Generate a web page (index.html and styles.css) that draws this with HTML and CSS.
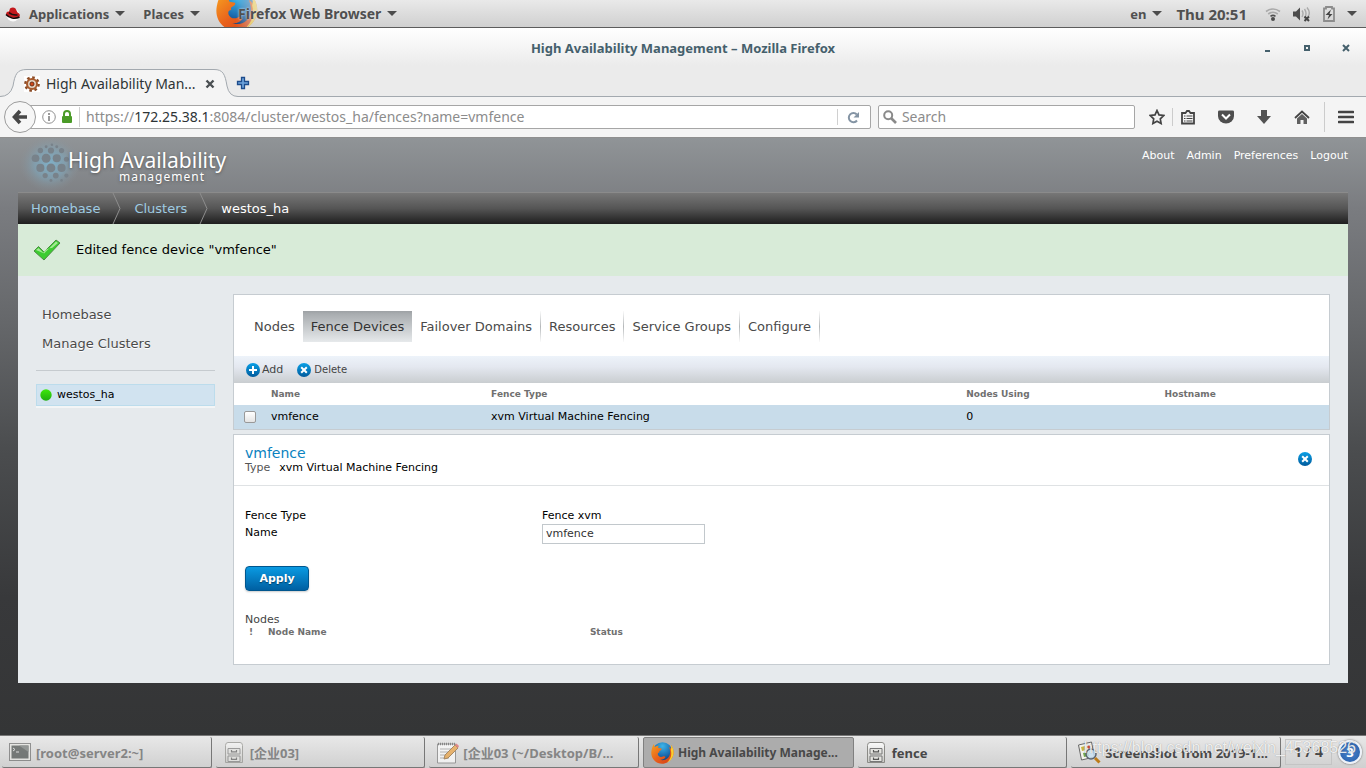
FILE: index.html
```html
<!DOCTYPE html>
<html lang="en">
<head>
<meta charset="utf-8">
<title>High Availability Management</title>
<link rel="stylesheet" href="styles.css">
</head>
<body>
<svg class="defs" aria-hidden="true">
  <defs>
    <linearGradient id="blue" x1="0" y1="0" x2="0" y2="1"><stop offset="0" stop-color="#0aa0e6"/><stop offset="1" stop-color="#005a9c"/></linearGradient>
    <linearGradient id="green" x1="0" y1="0" x2="0" y2="1"><stop offset="0" stop-color="#3ee80c"/><stop offset="1" stop-color="#1fae10"/></linearGradient>
    <linearGradient id="orange" x1="0" y1="0" x2="1" y2="1"><stop offset="0" stop-color="#f7a020"/><stop offset=".5" stop-color="#e8601c"/><stop offset="1" stop-color="#d23c14"/></linearGradient>
    <radialGradient id="globe" cx=".5" cy=".2" r=".8"><stop offset="0" stop-color="#3cb4e8"/><stop offset=".6" stop-color="#1c6cb0"/><stop offset="1" stop-color="#14346c"/></radialGradient>
    <linearGradient id="cabinet" x1="0" y1="0" x2="0" y2="1"><stop offset="0" stop-color="#fafafa"/><stop offset="1" stop-color="#c8c8c4"/></linearGradient>
    <radialGradient id="glow"><stop offset="0" stop-color="#7fb2cb" stop-opacity=".95"/><stop offset=".5" stop-color="#7fa6ba" stop-opacity=".65"/><stop offset="1" stop-color="#8a9298" stop-opacity="0"/></radialGradient>
    <symbol id="firefox" viewBox="0 0 24 24">
      <circle cx="12.5" cy="11" r="9.8" fill="url(#globe)"/>
      <path d="M21 4c3 4 3.500 9 1 13-3 5-9 7-14 5C3 20 .5 15 1.500 9.500 2 7 2.500 5 4 3l.5 3c1.500-1 3-1.500 4.500-1.500C8 5.500 8 6.500 8.500 7l3 .5c.5 1-1 2-2 2.500-.5 1 0 1.500 0 1.500-1.500 0-2 1-1.500 2.500 1 2 3 2.500 5 1.500 1-.5 2-.5 2.500.5-1 2.500-4 3-6 2.500 5 2 10-1 10.500-6 .5-3-.5-5-1-6.500 1 .5 1.500 1 2 2 .3-1 .3-2.500 0-3.500z" fill="url(#orange)"/>
      <path d="M21 4c3 4 3.500 9 1 13-1 2-3 3.500-5 4.500 4-3.500 5-8 3.800-12.500.5-1.500.5-3 .2-5z" fill="#fbcf2c"/>
    </symbol>
    <symbol id="drawers" viewBox="0 0 24 24">
      <path d="M3.500 4.500Q3.500 1.500 6 1.500h12q2.500 0 2.500 3v17h-17z" fill="url(#cabinet)" stroke="#8a8a86"/>
      <path d="M6 7.500h12v5.500H6zM6 15h12v5.500H6z" fill="#e4e4e0" stroke="#777"/>
      <path d="M9.500 9v1.800h5V9M9.500 16.500v1.800h5v-1.800" fill="none" stroke="#555" stroke-width="1.200"/>
    </symbol>
    <symbol id="cross-dot" viewBox="0 0 14 14"><circle cx="7" cy="7" r="7" fill="url(#blue)"/><path d="M4.200 4.200l5.600 5.600m0-5.600l-5.600 5.600" stroke="#fff" stroke-width="2"/></symbol>
    <symbol id="caret" viewBox="0 0 10 5"><path d="M0 0h10L5 5z" fill="#4c4c4c"/></symbol>
  </defs>
</svg>

<header class="panel">
  <button class="panel-item" type="button">
    <svg class="hat" viewBox="0 0 16 16"><circle cx="8" cy="9" r="6.500" fill="#fafafa"/><path d="M1 8C1.500 5.500 3 5.500 4 5.500L5 2.500Q8 .5 10.500 2.500l2 4c2 1 3 2.500 2 4-2 2-6 1.500-9 .5C3 10 1 9.500 1 8z" fill="#c4181c"/><path d="M4 6.500q3 3 8.500 2.500" fill="none" stroke="#1c1010" stroke-width="1.500"/><path d="M1 8.500c3 3.500 9 5 13.500 2.500" fill="none" stroke="#160808" stroke-width="1.500"/></svg>
    <span>Applications</span><svg class="caret"><use href="#caret"/></svg>
  </button>
  <button class="panel-item" type="button"><span>Places</span><svg class="caret"><use href="#caret"/></svg></button>
  <button class="panel-item app-menu" type="button"><svg class="app-logo"><use href="#firefox"/></svg><span>Firefox Web Browser</span><svg class="caret"><use href="#caret"/></svg></button>
  <div class="panel-right">
    <button class="panel-item" type="button"><span>en</span><svg class="caret"><use href="#caret"/></svg></button>
    <span class="clock">Thu 20:51</span>
    <div class="status">
      <svg width="16" height="16" viewBox="0 0 16 16" fill="none" stroke-width="1.600"><path d="M1 5.500Q8 .5 15 5.500M3.200 8Q8 4.500 12.800 8" stroke="#aaa"/><path d="M5.500 10.300Q8 8.500 10.500 10.300" stroke="#505050"/><circle cx="8" cy="13" r="2" fill="#4c4c4c"/></svg>
      <svg width="18" height="16" viewBox="0 0 18 16" fill="none"><path d="M0 5.500h3L7 1.500v13l-4-4H0z" fill="#4c4c4c"/><path d="M9 4.500q2 3 0 6.500M11.500 3q3 4.500 0 9.500M14 1.500q4 5 1 9" stroke="#aaa" stroke-width="1.400"/><path d="M11.500 10.500l4.500 4.500m0-4.500L11.500 15" stroke="#444" stroke-width="2"/></svg>
      <svg width="12" height="16" viewBox="0 0 12 16"><path d="M1 2.500h2V1h6v1.500h2V15H1z" fill="none" stroke="#8c8c8c" stroke-width="1.800"/><path d="M8 3.500L2.500 9H6l-1.500 4.500L9.500 8H6.500z" fill="#444"/></svg>
      <svg class="caret"><use href="#caret"/></svg>
    </div>
  </div>
</header>

<section class="browser-top">
  <div class="titlebar">
    <span class="title">High Availability Management – Mozilla Firefox</span>
    <div class="window-buttons">
      <button type="button" aria-label="Minimize"><svg width="8" height="8"><path d="M1 6h5v2H1z" fill="#45606c"/></svg></button>
      <button type="button" aria-label="Maximize"><svg width="8" height="8"><path d="M2 2h4v4H2z" fill="none" stroke="#45606c" stroke-width="2"/></svg></button>
      <button type="button" aria-label="Close"><svg width="8" height="8"><path d="M1 1l6 6m0-6L1 7" stroke="#45606c" stroke-width="2"/></svg></button>
    </div>
  </div>
  <div class="tabstrip">
    <div class="browser-tab">
      <svg class="tab-shape" viewBox="0 0 238 30" preserveAspectRatio="none"><path d="M0 28.500Q10 28.500 13 18C15 6 17 1.500 27 1.500H214C223 1.500 225 6 227 18Q229 28.500 238 28.500V30H0z" fill="#f4f4f4"/><path d="M0 28.500Q10 28.500 13 18C15 6 17 1.500 27 1.500H214C223 1.500 225 6 227 18Q229 28.500 238 28.500" fill="none" stroke="#a3a9af"/></svg>
      <svg class="tab-icon" viewBox="0 0 16 16"><path fill="#fff" d="M0 0h16v16H0z"/><circle cx="8" cy="8" r="6.600" fill="none" stroke="#8a4a24" stroke-width="2.500" stroke-dasharray="2.600 2.580"/><circle cx="8" cy="8" r="5" fill="#e2d2c2" stroke="#a85a2c" stroke-width="2"/><circle cx="8" cy="8" r="2" fill="#d44818" stroke="#6a3018"/></svg>
      <span class="tab-title">High Availability Man...</span>
      <button class="tab-close" type="button" aria-label="Close tab"><svg width="10" height="10"><path d="M1.500 1.500l7 7m0-7l-7 7" stroke="#4a4f52" stroke-width="2.400"/></svg></button>
    </div>
    <button class="new-tab" type="button" aria-label="New tab"><svg width="14" height="14"><path d="M5.500 1.500h3v4h4v3h-4v4h-3v-4h-4v-3h4z" fill="#6ea4dc" stroke="#1e4c8c" stroke-width="1.300"/></svg></button>
  </div>
  <nav class="toolbar" aria-label="Navigation">
    <button class="back" type="button" aria-label="Back"><svg width="16" height="16"><path d="M8 2L2.500 8 8 14M3 8h12" fill="none" stroke="#474747" stroke-width="3.600"/></svg></button>
    <div class="urlbar">
      <svg width="14" height="14" viewBox="0 0 14 14" fill="none" stroke="#909090"><circle cx="7" cy="7" r="6.300"/><path d="M7 6v5M7 3v2" stroke-width="1.800"/></svg>
      <svg width="12" height="14" viewBox="0 0 12 14"><path d="M3 6V4a3 3 0 016 0v2" fill="none" stroke="#4b9b28" stroke-width="2"/><rect x="1" y="6" width="10" height="7" rx="1" fill="#4b9b28"/></svg>
      <div class="url" role="textbox" aria-label="Address" contenteditable="true" spellcheck="false">https://<b>172.25.38.1</b>:8084/cluster/westos_ha/fences?name=vmfence</div>
      <button class="reload" type="button" aria-label="Reload"><svg width="13" height="13" viewBox="0 0 13 13"><path d="M10 9.500A4.600 4.600 0 119.800 3.500" fill="none" stroke="#8494a4" stroke-width="2"/><path d="M12 1v5.500H6.500z" fill="#8494a4"/></svg></button>
    </div>
    <label class="search"><svg width="14" height="14" viewBox="0 0 14 14" fill="none" stroke="#8a8a8a"><circle cx="5.200" cy="5.200" r="4" stroke-width="2"/><path d="M8 8l5 5" stroke-width="2.600"/></svg><input type="text" placeholder="Search" aria-label="Search"></label>
    <div class="tools">
      <button type="button" aria-label="Bookmark"><svg viewBox="0 0 16 16"><path d="M8 1.500l2 4.400 4.700.6-3.400 3.300.8 4.700L8 12.200l-4.100 2.300.8-4.700L1.300 6.500 6 5.900z" fill="none" stroke="#444" stroke-width="1.700"/></svg></button>
      <button type="button" class="ruled" aria-label="Bookmarks list"><svg viewBox="0 0 16 16"><path d="M2 4h3.500L7 2h2l1.500 2H14v10.500H2z" fill="none" stroke="#444" stroke-width="1.800"/><path d="M4 7h1.500m1 0h6M4 9.500h1.500m1 0h6M4 12h1.500m1 0h6" stroke="#444" stroke-width="1.200"/></svg></button>
      <button type="button" aria-label="Pocket"><svg viewBox="0 0 16 16"><path d="M0 2.500Q0 1.500 1.500 1.500h13Q16 1.500 16 2.500V7a8 7.500 0 01-16 0z" fill="#4e4e4e"/><path d="M4 5.500l4 4 4-4" fill="none" stroke="#fff" stroke-width="2"/></svg></button>
      <button type="button" aria-label="Downloads"><svg viewBox="0 0 16 16"><path d="M5 1h6v6h4l-7 8-7-8h4z" fill="#525252"/></svg></button>
      <button type="button" aria-label="Home"><svg viewBox="0 0 16 16"><path d="M1 9l7-6.500L15 9" fill="none" stroke="#444" stroke-width="1.800"/><path d="M3 9.500l5-4.500 5 4.500V15H9.500v-4h-3v4H3z" fill="#606060"/></svg></button>
      <button type="button" class="ruled menu" aria-label="Menu"><svg viewBox="0 0 16 16"><path d="M1 3h14M1 8h14M1 13h14" stroke="#444" stroke-width="2.600" stroke-linecap="round"/></svg></button>
    </div>
  </nav>
</section>

<main class="page">
  <header class="masthead">
    <div class="brand">
      <svg class="brand-mark" viewBox="0 0 64 56"><ellipse cx="32" cy="27" rx="32" ry="29" fill="url(#glow)"/><g fill="#78828a"><circle cx="28" cy="9" r="1.500"/><circle cx="34" cy="7" r="1.300"/><circle cx="39" cy="9" r="1.500"/><circle cx="22" cy="13" r="2.800"/><circle cx="33" cy="13" r="3.200"/><circle cx="44" cy="13" r="2.700"/><circle cx="17" cy="21" r="4"/><circle cx="28" cy="21" r="4.600"/><circle cx="39" cy="21" r="4.200"/><circle cx="49" cy="22" r="2.600"/><circle cx="22" cy="31" r="4.200"/><circle cx="33" cy="31" r="4.600"/><circle cx="44" cy="31" r="4.200"/><circle cx="27" cy="39" r="2.700"/><circle cx="38" cy="39" r="3"/><circle cx="49" cy="39" r="2.200"/><circle cx="33" cy="44" r="1.500"/><circle cx="44" cy="44" r="1.400"/></g></svg>
      <div class="brand-text"><strong>High Availability</strong><span>management</span></div>
    </div>
    <nav class="account"><a href="#about">About</a><a href="#admin">Admin</a><a href="#preferences">Preferences</a><a href="#logout">Logout</a></nav>
  </header>

  <nav class="crumbs" aria-label="Breadcrumb">
    <a href="#home">Homebase</a>
    <svg width="10" height="31" viewBox="0 0 10 31"><path d="M1 0l7 15.500L1 31" fill="none" stroke="#8e8e8e"/></svg>
    <a href="#clusters">Clusters</a>
    <svg width="10" height="31" viewBox="0 0 10 31"><path d="M1 0l7 15.500L1 31" fill="none" stroke="#8e8e8e"/></svg>
    <span>westos_ha</span>
  </nav>

  <div class="flash" role="status">
    <svg width="28" height="24" viewBox="0 0 28 24"><path d="M1 13l4.500-4.500L11 14 23 2l4 3-16 17z" fill="#3ccc30" stroke="#4c8c44"/><path d="M3 12l2.500-2 5.500 5.500L23 3.500l2 1.500-6 5q-6 0-9 5z" fill="#a4e894"/></svg>
    <span>Edited fence device "vmfence"</span>
  </div>

  <div class="workspace">
    <aside class="sidebar">
      <nav class="side-links"><a href="#home">Homebase</a><a href="#clusters">Manage Clusters</a></nav>
      <a class="cluster" href="#westos"><svg width="12" height="12"><circle cx="6" cy="6" r="5.700" fill="url(#green)"/></svg>westos_ha</a>
    </aside>

    <div class="content">
      <section class="box">
        <nav class="tabs">
          <a href="#nodes">Nodes</a><a class="active" href="#fences">Fence Devices</a><a class="rule" href="#failover">Failover Domains</a><a class="rule" href="#resources">Resources</a><a class="rule" href="#services">Service Groups</a><a class="rule" href="#configure">Configure</a>
        </nav>
        <div class="actions">
          <button class="add" type="button"><svg width="14" height="14" viewBox="0 0 14 14"><circle cx="7" cy="7" r="7" fill="url(#blue)"/><path d="M7 3v8M3 7h8" stroke="#fff" stroke-width="2"/></svg>Add</button>
          <button class="delete" type="button"><svg width="14" height="14"><use href="#cross-dot"/></svg>Delete</button>
        </div>
        <table class="fences">
          <colgroup><col class="c-check"><col class="c-name"><col class="c-type"><col class="c-using"><col></colgroup>
          <thead><tr><th></th><th>Name</th><th>Fence Type</th><th>Nodes Using</th><th>Hostname</th></tr></thead>
          <tbody><tr><td class="check"><input type="checkbox" aria-label="Select vmfence"></td><td>vmfence</td><td>xvm Virtual Machine Fencing</td><td>0</td><td></td></tr></tbody>
        </table>
      </section>

      <section class="box">
        <header class="detail-head">
          <div><h2>vmfence</h2><p><span>Type</span>xvm Virtual Machine Fencing</p></div>
          <button type="button" aria-label="Close details"><svg width="14" height="14"><use href="#cross-dot"/></svg></button>
        </header>
        <form class="detail-body">
          <div class="fields">
            <span>Fence Type</span><span>Fence xvm</span>
            <label for="fence-name">Name</label><input id="fence-name" type="text" value="vmfence">
          </div>
          <button class="apply" type="button">Apply</button>
          <h3>Nodes</h3>
          <table class="nodes"><colgroup><col class="c-flag"><col class="c-node"><col></colgroup><thead><tr><th>!</th><th>Node Name</th><th>Status</th></tr></thead></table>
        </form>
      </section>
    </div>
  </div>
</main>

<footer class="taskbar">
  <button class="task dim" type="button"><svg viewBox="0 0 24 24"><rect x="1.500" y="2.500" width="21" height="17" fill="#e8e8e4" stroke="#666"/><rect x="3.500" y="4.500" width="17" height="13" fill="#3e4442"/><path d="M5 7l2 1.500L5 10m3 1h3" fill="none" stroke="#ddd"/><path d="M11 4.500h9.500V11z" fill="#6a706e"/></svg><span>[root@server2:~]</span></button>
  <button class="task dim" type="button"><svg><use href="#drawers"/></svg><span>[企业03]</span></button>
  <button class="task dim" type="button"><svg viewBox="0 0 24 24"><path d="M2.500 3h18v19h-18z" fill="#fff" stroke="#777"/><path d="M5 8h13M5 11h9M5 14h7M5 17h9" stroke="#999"/><path d="M3 3h17" stroke="#555" stroke-width="2.500" stroke-dasharray="1 1"/><path d="M9 18l1-4L20 4l3 3-10 10z" fill="#ec9c34" stroke="#8a5c24"/><path d="M20 4l3 3 1-2-2.500-2.500z" fill="#e05858"/></svg><span>[企业03 (~/Desktop/B/...</span></button>
  <button class="task current" type="button"><svg><use href="#firefox"/></svg><span>High Availability Manage...</span></button>
  <button class="task" type="button"><svg><use href="#drawers"/></svg><span>fence</span></button>
  <button class="task" type="button"><svg viewBox="0 0 24 24"><path d="M1.500 4l13-3 3 15-13 3z" fill="#f4f4ec" stroke="#666"/><path d="M4 6l4-1 1 4-4 1z" fill="#c8b440"/><circle cx="12" cy="6" r="1.800" fill="#cc5030"/><path d="M6 12l5-1 1 4-5 1z" fill="#72a84c"/><circle cx="14" cy="13" r="5" fill="#c4dcf0" fill-opacity=".8" stroke="#5c6470" stroke-width="1.500"/><path d="M18 17l4.500 4.500" stroke="#bd7b18" stroke-width="3"/></svg><span>Screenshot from 2019-1...</span></button>
  <span class="pager">1 / 4</span>
  <button class="tray" type="button" aria-label="Messages">3</button>
  <span class="watermark">https://blog.csdn.net/weixin_45368526</span>
</footer>
</body>
</html>
```

FILE: styles.css
```css
* { box-sizing: border-box; }

body {
  margin: 0;
  min-height: 100vh;
  display: flex;
  flex-direction: column;
  font: 13px/16px "DejaVu Sans", sans-serif;
  color: #000;
  background: #353637;
}

button {
  margin: 0;
  padding: 0;
  border: 0;
  background: none;
  font: inherit;
  color: inherit;
}

a { color: inherit; text-decoration: none; }
svg { display: block; flex: none; }
h2, h3, p { margin: 0; font-weight: normal; }
.defs { position: absolute; width: 0; height: 0; }

/* Desktop panel */
.panel {
  display: flex;
  align-items: center;
  gap: 18px;
  height: 28px;
  padding: 0 9px 0 5px;
  overflow: hidden;
  border-bottom: 1px solid #5c5c5c;
  background: linear-gradient(#e9e9e9, #d0d0d0);
  font: bold 13px/20px "Noto Sans", sans-serif;
  color: #505050;
}

.panel-item { display: flex; align-items: center; gap: 6px; }
.hat { width: 16px; height: 16px; margin-right: 2px; }
.caret { width: 10px; height: 5px; }
.app-menu { position: relative; margin-left: 20px; font-size: 14px; text-shadow: 0 0 2px #eee; }
.app-menu span { position: relative; }

.app-logo {
  position: absolute;
  left: -24px;
  top: -15px;
  width: 44px;
  height: 44px;
  -webkit-mask-image: linear-gradient(90deg, #000 50%, rgba(0, 0, 0, .3));
  mask-image: linear-gradient(90deg, #000 50%, rgba(0, 0, 0, .3));
}

.panel-right { display: flex; align-items: center; gap: 14px; margin-left: auto; }
.clock { font-size: 15px; }
.status { display: flex; align-items: center; gap: 12px; margin-left: 4px; }

/* Browser frame */
.browser-top {
  background: linear-gradient(#fff, #ebebeb 38px);
  color: #2e3436;
  font-family: "Noto Sans", sans-serif;
}

.titlebar {
  display: grid;
  grid-template-columns: 1fr auto 1fr;
  align-items: center;
  height: 40px;
  padding: 0 16px;
}

.title { grid-column: 2; font-size: 13px; font-weight: bold; color: #45606c; }
.window-buttons { display: flex; justify-content: flex-end; gap: 31px; }

.tabstrip {
  display: flex;
  align-items: center;
  height: 29px;
  box-shadow: inset 0 -1px #a3a9af;
}

.browser-tab {
  position: relative;
  display: flex;
  align-items: center;
  width: 238px;
  height: 30px;
  padding: 2px 23px 0 24px;
}

.tab-shape { position: absolute; inset: 0; width: 100%; height: 100%; }
.tab-icon { position: relative; width: 16px; height: 16px; }
.tab-title { position: relative; flex: 1; margin-left: 6px; font-size: 14px; white-space: nowrap; }
.tab-close { position: relative; }
.new-tab { margin-left: -2px; }

.toolbar {
  display: flex;
  align-items: center;
  height: 41px;
  padding: 0 12px 0 4px;
  background: #f4f4f4;
  border-bottom: 1px solid #8f8f8f;
}

.back {
  position: relative;
  display: grid;
  place-items: center;
  width: 32px;
  height: 32px;
  border: 1px solid #9c9c9c;
  border-radius: 50%;
  background: #f6f6f6;
}

.urlbar, .search {
  display: flex;
  align-items: center;
  height: 24px;
  border: 1px solid #a6a6a6;
  border-radius: 2px;
  background: #fff;
  font-size: 14px;
  line-height: 20px;
}

.urlbar { flex: 844; gap: 5px; margin-left: -8px; padding-left: 13px; }

.url {
  display: flex;
  align-items: center;
  flex: 1;
  margin-left: 1px;
  padding-left: 6px;
  border-left: 1px solid #d0d0d0;
  color: #8c8c8c;
  white-space: nowrap;
}

.url b { font-weight: normal; color: #2e3436; }
.reload { display: grid; place-items: center; width: 33px; height: 16px; border-left: 1px solid #d0d0d0; }
.search { flex: 256; margin-left: 7px; padding-left: 4px; gap: 5px; }
.search input { flex: 1; min-width: 0; padding: 0; border: 0; background: none; font: inherit; color: inherit; }
.search input::placeholder { color: #8c8c8c; opacity: 1; }

.tools { display: flex; margin-left: 14px; }
.tools button { display: grid; place-items: center; width: 38px; height: 30px; }
.tools button:first-child { width: 16px; }
.tools svg { width: 16px; height: 16px; }
.tools .ruled { position: relative; }
.tools .ruled:nth-child(2) { width: 39px; margin-left: 3px; }
.tools .ruled::before { content: ""; position: absolute; left: 4px; top: 6px; width: 1px; height: 18px; background: #ccc; }
.tools .menu { width: 30px; justify-items: end; margin-left: 3px; }
.tools .menu::before { left: 0; top: 0; height: 30px; }

/* Application page */
.page {
  flex: 1;
  padding: 0 18px;
  background: linear-gradient(#909497, #7a7c80 70px, #66686b 180px, #4b4d4f 310px, #38393b 460px, #343536);
}

.masthead { display: flex; justify-content: space-between; height: 54px; }
.brand { display: flex; }
.brand-mark { width: 64px; height: 54px; margin-right: -14px; }

.brand-text {
  display: flex;
  flex-direction: column;
  padding-top: 11px;
  font-family: "Noto Sans", sans-serif;
  color: #fff;
  text-shadow: 0 1px 3px #555;
}

.brand-text strong { font-size: 21px; line-height: 22px; font-weight: 400; }
.brand-text span { padding-left: 51px; font-size: 12px; line-height: 12px; letter-spacing: 1px; }
.account { display: flex; gap: 12px; padding-top: 10px; font-size: 11px; color: #fff; }

.crumbs {
  display: flex;
  align-items: center;
  height: 32px;
  padding-left: 13px;
  gap: 12px;
  border-top: 1px solid #8b8b8b;
  background: linear-gradient(#777, #555 50%, #1e1e1e);
  color: #fff;
}

.crumbs a { color: #9fcbe2; }

.flash {
  display: flex;
  align-items: center;
  gap: 15px;
  height: 52px;
  padding-left: 15px;
  background: #d8ebd8;
}

.workspace { display: flex; gap: 18px; padding: 18px; background: #e6eaed; }
.sidebar { flex: none; width: 179px; }

.side-links {
  display: flex;
  flex-direction: column;
  gap: 13px;
  padding: 13px 6px 18px;
  margin-bottom: 13px;
  border-bottom: 1px solid #c6cbcf;
  color: #4a4a4a;
  text-shadow: 0 1px #fff;
}

.cluster {
  display: flex;
  align-items: center;
  gap: 5px;
  height: 22px;
  padding: 0 3px;
  border: 1px solid #bcdcec;
  background: #d1e3f0;
  box-shadow: 0 2px #f3f5f6;
  font-size: 11px;
}

.content { flex: 1; min-width: 0; display: flex; flex-direction: column; gap: 4px; }
.box { border: 1px solid #c6ccd1; background: #fff; }
.tabs { display: flex; padding: 16px 12px 14px; color: #4a4a4a; }
.tabs a { padding: 8px 8px 7px; white-space: nowrap; }
.tabs .active { background: linear-gradient(#9da1a4, #a9adb0 10%, #e6e9eb); color: #333; }

.tabs .rule {
  border-right: 1px solid;
  border-image: linear-gradient(#fff, #b5b8ba 50%, #fff) 1;
}

.actions {
  display: flex;
  align-items: center;
  gap: 14px;
  height: 27px;
  padding-left: 12px;
  background: linear-gradient(#edf3fa, #e4e8f0 40%, #c9cdd0);
  color: #444;
}

.actions button { display: flex; align-items: center; gap: 2px; font-size: 11px; }
.actions .delete { gap: 3px; font-size: 10px; }

table { width: 100%; border-collapse: collapse; table-layout: fixed; font-size: 11px; }
th, td { padding: 0; text-align: left; }
th { font: bold 9px/12px "DejaVu Sans", sans-serif; color: #707070; }
.fences th { height: 22px; }
.fences td { height: 24px; background: #c8dcea; }
.c-check { width: 37px; }
.c-name { width: 20.1%; }
.c-type { width: 43.4%; }
.c-using { width: 18.1%; }
.check { padding-left: 10px; }

.check input {
  display: block;
  appearance: none;
  width: 12px;
  height: 12px;
  margin: 0;
  border: 1px solid #999;
  border-radius: 2px;
  background: linear-gradient(#fff, #e4e4e4);
}

.detail-head {
  display: flex;
  align-items: center;
  justify-content: space-between;
  height: 51px;
  padding: 0 17px 2px 11px;
  border-bottom: 1px solid #dfe2e4;
}

.detail-head div { padding-top: 2px; }
.detail-head h2 { font-size: 14px; line-height: 15px; color: #0982c0; }
.detail-head p { font-size: 11px; line-height: 13px; }
.detail-head p span { margin-right: 9px; color: #555; }

.detail-body { padding: 21px 11px 26px; font-size: 11px; }
.fields { display: grid; grid-template-columns: 297px 163px; line-height: 17px; }

.fields input {
  width: 100%;
  height: 20px;
  padding: 0 3px 2px;
  border: 1px solid #c2c8cc;
  font: inherit;
  color: #333;
}

.apply {
  width: 64px;
  height: 25px;
  margin: 22px 0;
  border: 1px solid #00568e;
  border-radius: 4px;
  background: linear-gradient(#0a9ae2, #0060a2);
  box-shadow: 0 1px 2px #ccc;
  color: #fff;
  font-weight: bold;
  text-shadow: 0 1px 1px #00406c;
}

.detail-body h3 { font-size: 11px; line-height: 13px; color: #444; }
.nodes th:first-child { padding-left: 4px; }
.c-flag { width: 23px; }
.c-node { width: 30%; }

/* Window list */
.taskbar {
  position: relative;
  display: flex;
  align-items: center;
  gap: 4px;
  height: 33px;
  padding: 0 4px 0 2px;
  border-top: 1px solid #777;
  background: linear-gradient(#e8e8e8, #d0d0d0);
  font: bold 13px/20px "Noto Sans", "Noto Sans CJK SC", sans-serif;
  color: #484848;
}

.task {
  flex: 1 1 0;
  min-width: 0;
  display: flex;
  align-items: center;
  gap: 4px;
  height: 31px;
  padding: 2px 6px 0;
  border-right: 1px solid #777;
  border-bottom: 1px solid #777;
  border-radius: 2px;
  white-space: nowrap;
  overflow: hidden;
}

.task svg { width: 24px; height: 24px; }
.dim { color: #858585; }
.dim svg { opacity: .65; }
.current { background: #acacac; border: 1px solid #808080; font-size: 12px; }
.pager { width: 47px; padding: 2px 0; border: 1px solid #c4c4c4; text-align: center; font-size: 14px; }

.tray {
  width: 24px;
  height: 24px;
  margin-left: 2px;
  border: 2px solid #eef2f8;
  border-radius: 50%;
  background: radial-gradient(#4c84cc, #245ca8);
  box-shadow: 0 0 2px #555;
  color: #fff;
}

.watermark {
  position: absolute;
  right: 10px;
  top: 2px;
  font: 16px/20px "Liberation Sans", sans-serif;
  color: rgba(255, 255, 255, .85);
  text-shadow: 0 0 1px rgba(90, 90, 90, .6);
  pointer-events: none;
}
```
